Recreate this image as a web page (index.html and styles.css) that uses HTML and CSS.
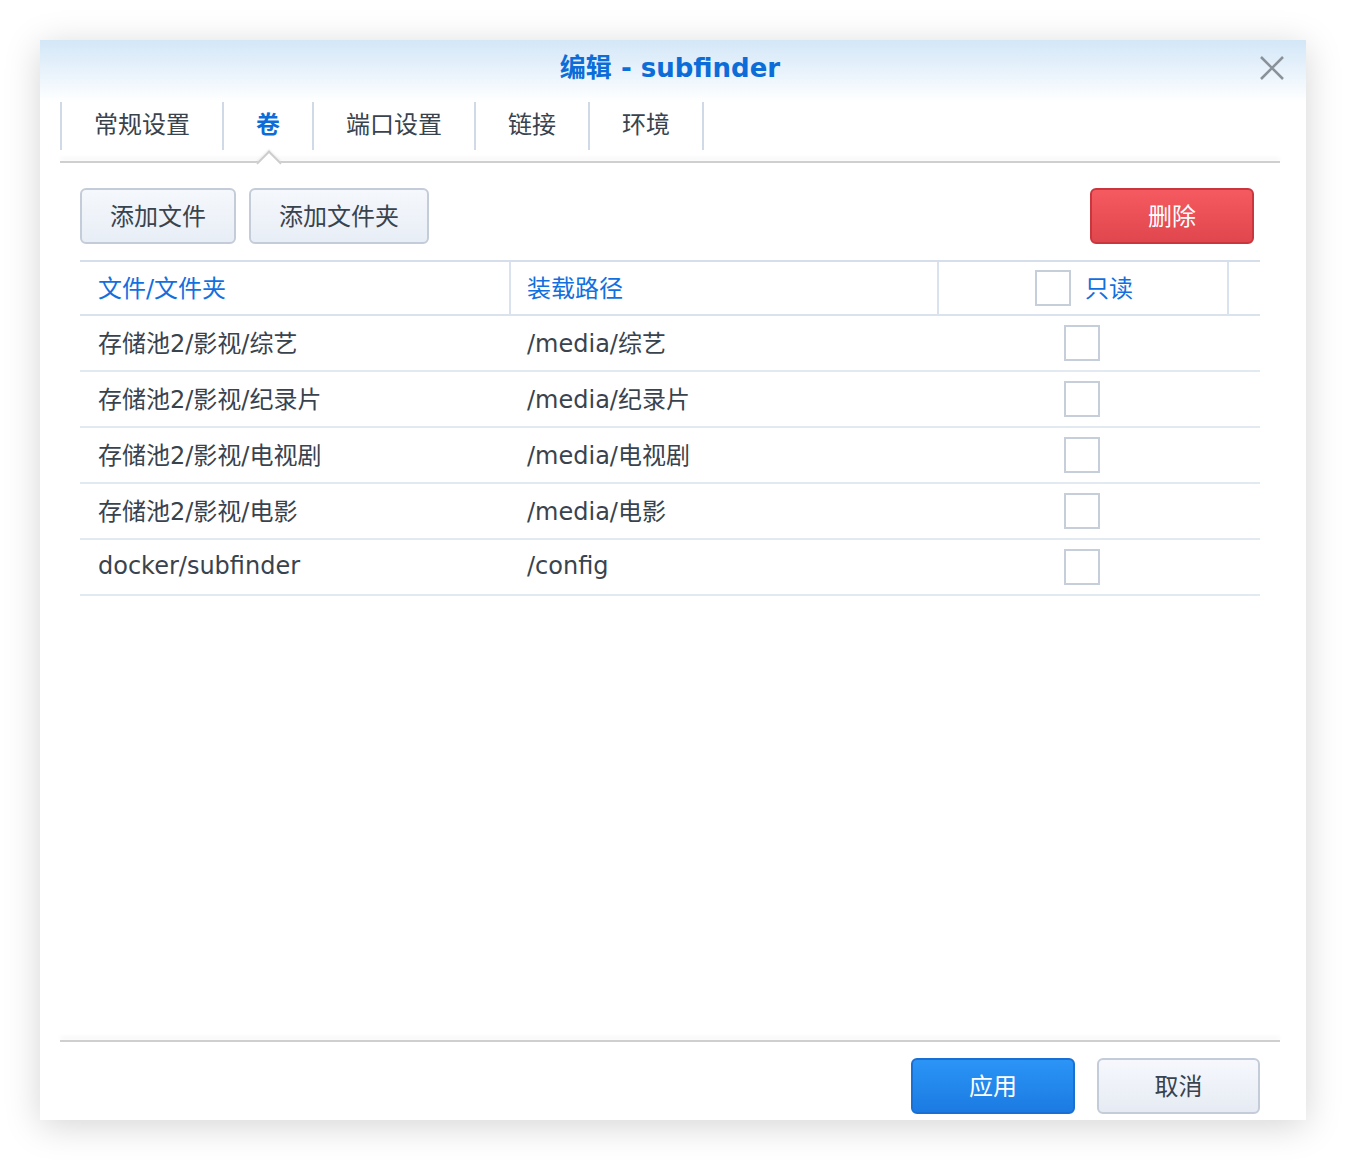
FILE: index.html
```html
<!DOCTYPE html>
<html lang="zh-CN">
<head>
<meta charset="utf-8">
<title>编辑 - subfinder</title>
<link rel="stylesheet" href="styles.css">
</head>
<body>
<div class="dialog">
  <div class="header">
    <div class="title">编辑 - subfinder</div>
    <button class="close" aria-label="关闭">
      <svg width="26" height="26" viewBox="0 0 26 26"><path d="M2 2 L24 24 M24 2 L2 24" stroke="#8b9199" stroke-width="2.6" fill="none"/></svg>
    </button>
  </div>
  <div class="tabs">
    <div class="tab">常规设置</div>
    <div class="tab active">卷</div>
    <div class="tab">端口设置</div>
    <div class="tab">链接</div>
    <div class="tab">环境</div>
  </div>
  <div class="tabline"></div>
  <div class="content">
    <div class="toolbar">
      <button class="btn">添加文件</button>
      <button class="btn wide">添加文件夹</button>
      <div class="spacer"></div>
      <button class="btn danger">删除</button>
    </div>
    <div class="grid">
      <div class="row head">
        <div class="cell">文件/文件夹</div>
        <div class="cell">装载路径</div>
        <div class="cell center"><span class="check"></span><span class="ro">只读</span></div>
        <div class="cell last"></div>
      </div>
      <div class="row">
        <div class="cell">存储池2/影视/综艺</div>
        <div class="cell">/media/综艺</div>
        <div class="cell center"><span class="check"></span></div>
        <div class="cell"></div>
      </div>
      <div class="row">
        <div class="cell">存储池2/影视/纪录片</div>
        <div class="cell">/media/纪录片</div>
        <div class="cell center"><span class="check"></span></div>
        <div class="cell"></div>
      </div>
      <div class="row">
        <div class="cell">存储池2/影视/电视剧</div>
        <div class="cell">/media/电视剧</div>
        <div class="cell center"><span class="check"></span></div>
        <div class="cell"></div>
      </div>
      <div class="row">
        <div class="cell">存储池2/影视/电影</div>
        <div class="cell">/media/电影</div>
        <div class="cell center"><span class="check"></span></div>
        <div class="cell"></div>
      </div>
      <div class="row">
        <div class="cell">docker/subfinder</div>
        <div class="cell">/config</div>
        <div class="cell center"><span class="check"></span></div>
        <div class="cell"></div>
      </div>
    </div>
  </div>
  <div class="footline"></div>
  <div class="footer">
    <button class="btn primary">应用</button>
    <button class="btn cancel">取消</button>
  </div>
</div>
</body>
</html>
```

FILE: styles.css
```css
html, body {
  margin: 0;
  padding: 0;
  background: #ffffff;
}
body {
  font-family: "DejaVu Sans", "Noto Sans CJK SC", sans-serif;
  color: #3c4652;
  width: 1346px;
  height: 1160px;
  overflow: hidden;
}
.dialog {
  margin: 40px 0 0 40px;
  width: 1266px;
  height: 1080px;
  background: #fff;
  box-shadow: 0 6px 34px rgba(0, 0, 0, 0.17);
  display: flex;
  flex-direction: column;
  position: relative;
}
.header {
  height: 62px;
  background: linear-gradient(to bottom, #d3e7f7 0%, #e6f1fb 45%, #ffffff 100%);
  display: flex;
  justify-content: center;
  position: relative;
}
.title {
  line-height: 56px;
  font-size: 26px;
  font-weight: 700;
  color: #0c6dd8;
  margin-right: 6px;
}
.close {
  position: absolute;
  right: 21px;
  top: 15px;
  width: 26px;
  height: 26px;
  padding: 0;
  border: 0;
  background: none;
}
.close svg { display: block; }
.tabs {
  display: flex;
  margin: 0 20px;
  height: 48px;
  padding-bottom: 11px;
}
.tab {
  position: relative;
  border-left: 2px solid #cfdae6;
  padding: 0 32px;
  font-size: 24px;
  line-height: 47px;
  color: #39434e;
}
.tab:last-child {
  border-right: 2px solid #cfdae6;
}
.tab.active {
  color: #0c6dd8;
  font-weight: 700;
}
.tab.active::after {
  content: "";
  position: absolute;
  left: 50%;
  top: 52px;
  width: 16px;
  height: 16px;
  margin-left: -8px;
  background: #fff;
  border-top: 2px solid #cdcdcd;
  border-left: 2px solid #cdcdcd;
  transform: rotate(45deg);
  box-shadow: -1px -1px 2px rgba(0, 0, 0, 0.06);
  z-index: 2;
}
.tabline, .footline {
  margin: 0 26px 0 20px;
  height: 2px;
  background: #cfcfcf;
  box-shadow: 0 -3px 4px rgba(0, 0, 0, 0.06);
}
.content {
  flex: 1;
  padding: 25px 46px 0 40px;
}
.toolbar {
  display: flex;
  gap: 13px;
  height: 56px;
}
.spacer { flex: 1; }
.btn {
  font-family: "DejaVu Sans", "Noto Sans CJK SC", sans-serif;
  font-size: 24px;
  color: #39434e;
  height: 56px;
  width: 156px;
  border: 2px solid #c3ccd8;
  border-radius: 6px;
  background: linear-gradient(to bottom, #f5f8fc, #e8eef6);
  padding: 0 0 3px 0;
}
.btn.wide { width: 180px; }
.btn.danger {
  width: 164px;
  margin-right: 6px;
  color: #fff;
  border-color: #c9363e;
  background: linear-gradient(to bottom, #f55a60, #e0464d);
}
.grid {
  margin-top: 16px;
  border-top: 2px solid #d5deea;
}
.row {
  display: grid;
  grid-template-columns: 429px 428px 290px 1fr;
  height: 54px;
  border-bottom: 2px solid #e3e9f1;
  font-size: 24px;
  color: #39434e;
}
.row.head {
  height: 52px;
  color: #1170e0;
  border-bottom-color: #d9e2ed;
}
.cell {
  display: flex;
  align-items: center;
  padding-left: 18px;
  padding-bottom: 3px;
  white-space: nowrap;
}
.row.head .cell + .cell {
  border-left: 2px solid #d9e2ed;
}
.row.head .cell:nth-child(2) { padding-left: 16px; }
.row:not(.head) .cell:nth-child(2) { padding-left: 18px; }
.cell.center {
  justify-content: center;
  padding-left: 0;
  padding-bottom: 0;
}
.row.head .cell.center { padding-left: 2px; }
.check {
  display: inline-block;
  width: 32px;
  height: 32px;
  border: 2px solid #c5ced9;
  background: #fff;
}
.ro {
  margin-left: 14px;
  padding-bottom: 3px;
}
.footer {
  display: flex;
  justify-content: flex-end;
  gap: 22px;
  padding: 16px 46px 6px 0;
}
.btn.primary {
  width: 164px;
  color: #fff;
  border-color: #1a6fd2;
  background: linear-gradient(to bottom, #2b95f6, #1b7be2);
}
.btn.cancel {
  width: 163px;
  background: linear-gradient(to bottom, #f6f8fd, #e6ebf3);
}
```
